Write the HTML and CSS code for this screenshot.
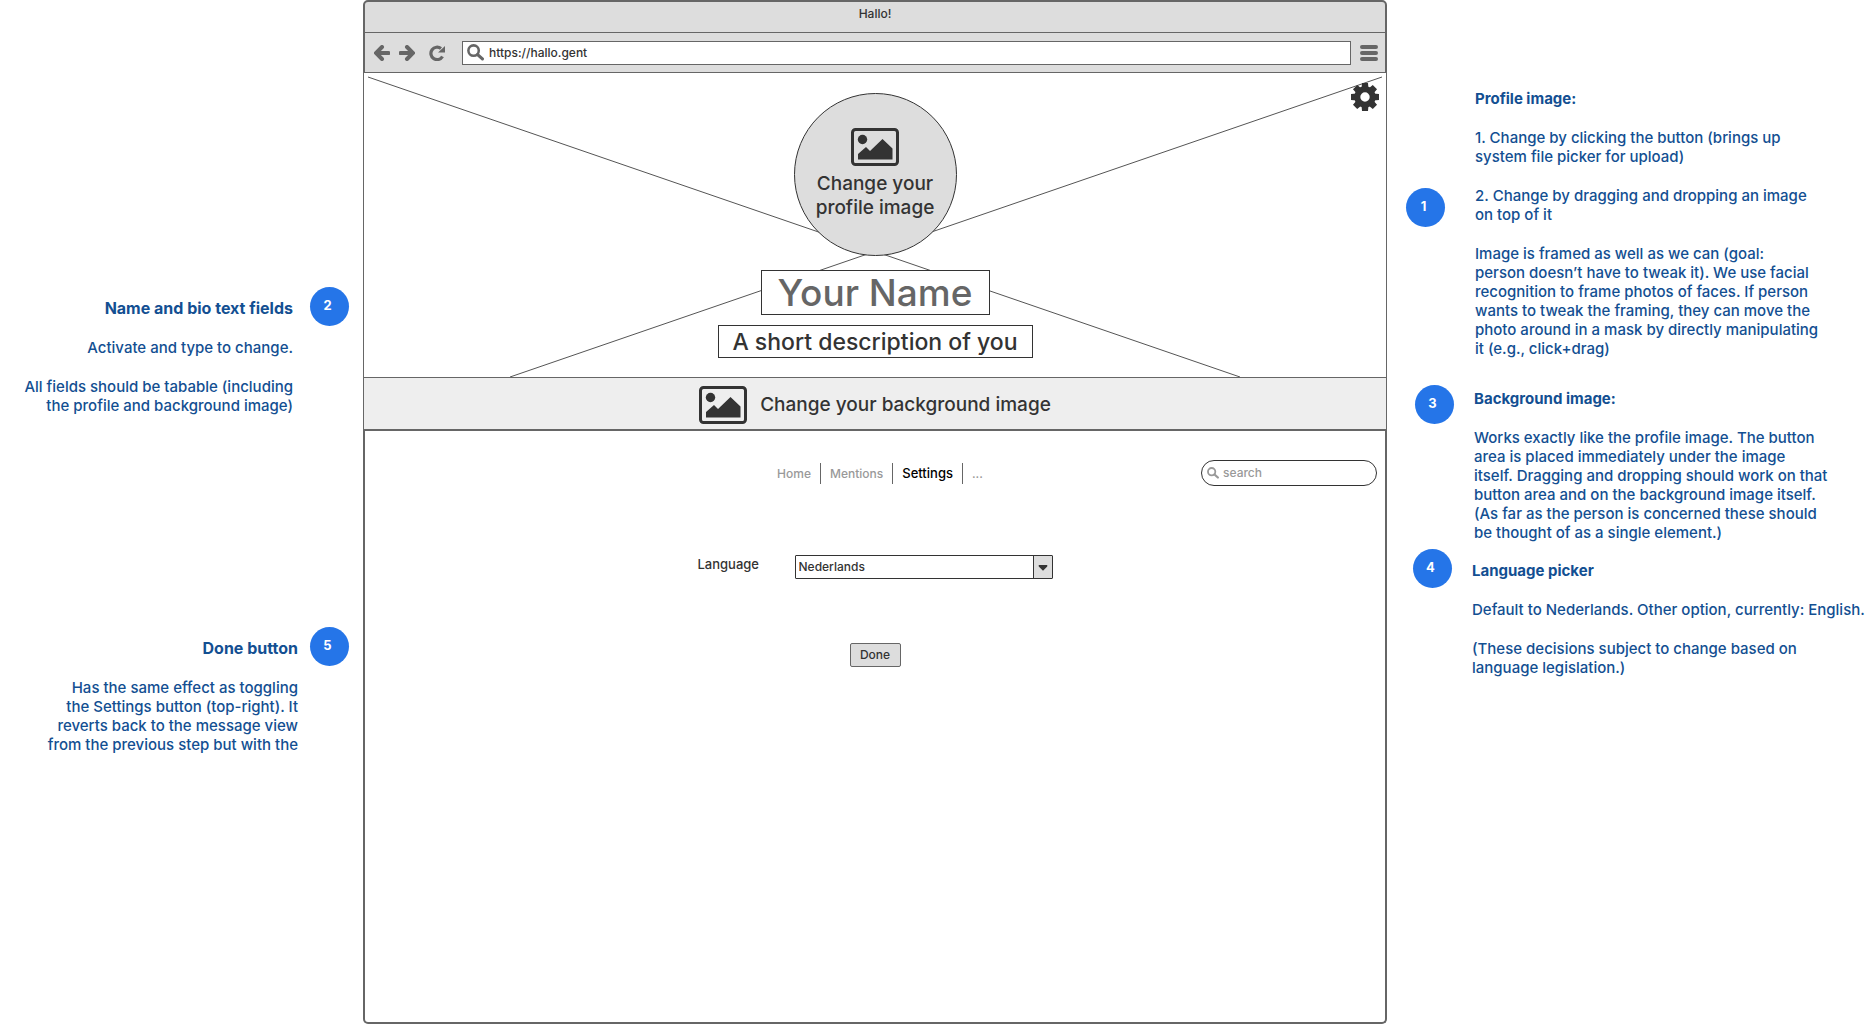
FILE: index.html
```html
<!DOCTYPE html>
<html lang="en">
<head>
<meta charset="utf-8">
<title>Hallo! settings wireframe</title>
<link rel="stylesheet" href="styles.css">
</head>
<body>
<svg class="sprite" aria-hidden="true">
  <symbol id="picture" viewBox="0 0 48 38">
    <rect x="1.5" y="1.5" width="45" height="35" rx="3" fill="none" stroke="currentColor" stroke-width="3"/>
    <circle cx="11.500" cy="11.500" r="4.700" fill="currentColor"/>
    <path d="M7 31.500V26l8-7 4 4L31.500 11 41.500 20.500v11z" fill="currentColor"/>
  </symbol>
  <symbol id="magnifier" viewBox="0 0 16 16">
    <circle cx="6.200" cy="6.200" r="4.900" fill="none" stroke="currentColor" stroke-width="2.400"/>
    <path d="M10 10l4.500 4" stroke="currentColor" stroke-width="3" stroke-linecap="round"/>
  </symbol>
</svg>
<div class="board">
  <aside class="notes notes-left">
    <section class="note note-fields">
      <div class="note-text">
        <h2>Name and bio text fields</h2>
        <p>Activate and type to change.</p>
        <p>All fields should be tabable (including<br>the profile and background image)</p>
      </div>
      <span class="badge">2</span>
    </section>
    <section class="note note-done">
      <div class="note-text">
        <h2>Done button</h2>
        <p>Has the same effect as toggling<br>the Settings button (top-right). It<br>reverts back to the message view<br>from the previous step but with the</p>
      </div>
      <span class="badge">5</span>
    </section>
  </aside>

  <main class="browser">
    <header class="chrome">
      <div class="title">Hallo!</div>
      <div class="toolbar">
        <button class="tool" aria-label="Back"><svg width="16" height="16" viewBox="0 0 16 16"><path d="M8 2L2 8l6 6M3 8h11.500" fill="none" stroke="currentColor" stroke-width="4" stroke-linecap="round" stroke-linejoin="miter"/></svg></button>
        <button class="tool" aria-label="Forward"><svg width="16" height="16" viewBox="0 0 16 16"><path d="M8 2l6 6-6 6M13 8H1.500" fill="none" stroke="currentColor" stroke-width="4" stroke-linecap="round" stroke-linejoin="miter"/></svg></button>
        <button class="tool reload" aria-label="Reload"><svg width="16" height="16" viewBox="0 0 16 16"><path d="M13.500 11.500A6.200 6.200 0 1 1 12 3.600" fill="none" stroke="currentColor" stroke-width="3.200"/><path d="M16 1v6.500H9z" fill="currentColor"/></svg></button>
        <label class="url"><svg width="17" height="17"><use href="#magnifier"/></svg><input type="text" value="https://hallo.gent" aria-label="Address"></label>
        <button class="tool menu" aria-label="Menu"><svg width="18" height="16" viewBox="0 0 18 16"><path d="M2 2h14M2 8h14M2 14h14" stroke="currentColor" stroke-width="4" stroke-linecap="round"/></svg></button>
      </div>
    </header>

    <section class="hero">
      <svg class="cross" viewBox="0 0 1022 304" preserveAspectRatio="none" aria-hidden="true"><path d="M4 4L876 304M1018 4L146 304" vector-effect="non-scaling-stroke"/></svg>
      <button class="gear" aria-label="Settings"><svg width="28" height="28" viewBox="-14 -14 28 28"><g fill="currentColor"><g id="teeth"><path id="tooth" d="M-3.500 -8L-3 -14H3L3.500 -8zM-3.500 8L-3 14H3L3.500 8z"/><use href="#tooth" transform="rotate(90)"/></g><use href="#teeth" transform="rotate(45)"/></g><circle r="7.700" fill="none" stroke="currentColor" stroke-width="6"/></svg></button>
      <button class="avatar"><svg width="48" height="38"><use href="#picture"/></svg><span>Change your<br>profile image</span></button>
      <input class="name" type="text" value="Your Name" aria-label="Name">
      <input class="bio" type="text" value="A short description of you" aria-label="Description">
    </section>

    <button class="background"><svg width="48" height="38"><use href="#picture"/></svg>Change your background image</button>

    <section class="panel">
      <div class="topline">
        <nav class="tabs">
          <a href="#home">Home</a>
          <a href="#mentions">Mentions</a>
          <a href="#settings" class="current">Settings</a>
          <a href="#more">...</a>
        </nav>
        <label class="search"><svg width="12" height="12"><use href="#magnifier"/></svg><input type="search" placeholder="search" aria-label="Search"></label>
      </div>
      <div class="field">
        <label for="language">Language</label>
        <div class="picker">
          <select id="language"><option>Nederlands</option><option>English</option></select>
          <svg class="arrow" width="19" height="22" viewBox="0 0 19 22"><path d="M5 9h9v1.500L9.500 15 5 10.500z" fill="currentColor"/></svg>
        </div>
      </div>
      <button class="done">Done</button>
    </section>
  </main>

  <aside class="notes notes-right">
    <section class="note note-profile">
      <span class="badge">1</span>
      <div class="note-text">
        <h2>Profile image:</h2>
        <p>1. Change by clicking the button (brings up<br>system file picker for upload)</p>
        <p>2. Change by dragging and dropping an image<br>on top of it</p>
        <p>Image is framed as well as we can (goal:<br>person doesn’t have to tweak it). We use facial<br>recognition to frame photos of faces. If person<br>wants to tweak the framing, they can move the<br>photo around in a mask by directly manipulating<br>it (e.g., click+drag)</p>
      </div>
    </section>
    <section class="note note-background">
      <span class="badge">3</span>
      <div class="note-text">
        <h2>Background image:</h2>
        <p>Works exactly like the profile image. The button<br>area is placed immediately under the image<br>itself. Dragging and dropping should work on that<br>button area and on the background image itself.<br>(As far as the person is concerned these should<br>be thought of as a single element.)</p>
      </div>
    </section>
    <section class="note note-language">
      <span class="badge">4</span>
      <div class="note-text">
        <h2>Language picker</h2>
        <p>Default to Nederlands. Other option, currently: English.</p>
        <p>(These decisions subject to change based on<br>language legislation.)</p>
      </div>
    </section>
  </aside>
</div>
</body>
</html>
```
FILE: styles.css
```css
:root {
  --line: #666;
  --ink: #333;
  --fill: #ddd;
  --note: #134f92;
  --badge: #2575e8;
}

* { box-sizing: border-box; }

body {
  margin: 0;
  background: #fff;
  color: var(--ink);
  font: 500 12px/16px Inter, "Open Sans", sans-serif;
}

button, input, select {
  margin: 0;
  padding: 0;
  border: 0;
  border-radius: 0;
  background: none;
  color: inherit;
  font: inherit;
}

input, select { min-width: 0; outline: 0; }

svg { display: block; flex: none; }

.sprite { position: absolute; width: 0; height: 0; }

.board {
  display: grid;
  grid-template-columns: 363fr 1024fr 483fr;
  min-height: 100vh;
}

/* Annotations */
.notes { min-width: 0; color: var(--note); }
.notes-left { padding: 287px 14px 0 0; }
.notes-right { padding: 89px 0 0 19px; }

.note { display: flex; align-items: flex-start; gap: 20px; }
.notes-left .note { justify-content: flex-end; text-align: right; }

.note-text { padding-top: 12px; font-size: 15px; line-height: 19px; white-space: nowrap; }
.note-text h2 { margin: 0; font-size: 15px; font-weight: 700; }
.notes-left h2 { font-size: 16px; }
.note-text p { margin: 20px 0 0; }

.note-fields { gap: 17px; }
.note-done { gap: 12px; margin-top: 212px; }
.note-profile { gap: 30px; }
.note-profile .note-text { padding-top: 0; }
.note-profile .badge { margin-top: 99px; }
.note-background { margin: 27px 0 0 9px; }
.note-background .note-text { padding-top: 4px; }
.note-language { margin: 7px 0 0 7px; }

.badge {
  flex: none;
  width: 39px;
  height: 39px;
  padding-right: 4px;
  border-radius: 50%;
  background: var(--badge);
  color: #fff;
  font-size: 13px;
  font-weight: 700;
  line-height: 36px;
  text-align: center;
}

/* Browser frame */
.browser { display: flex; flex-direction: column; min-width: 0; }

.chrome {
  border: 2px solid var(--line);
  border-bottom-width: 1px;
  border-radius: 5px 5px 0 0;
  background: var(--fill);
}

.title { height: 31px; padding-top: 4px; border-bottom: 1px solid var(--line); text-align: center; }

.toolbar { display: flex; align-items: center; gap: 9px; height: 39px; padding: 0 7px 0 9px; color: var(--line); }
.reload { margin-left: 5px; }

.url {
  display: flex;
  flex: 1;
  align-items: center;
  gap: 5px;
  height: 24px;
  margin-left: 8px;
  padding-left: 4px;
  border: 1px solid var(--line);
  background: #fff;
}
.url input { flex: 1; color: var(--ink); }

/* Cover with profile controls */
.hero {
  position: relative;
  display: flex;
  flex-direction: column;
  align-items: center;
  padding: 20px 0 19px;
  border: solid var(--line);
  border-width: 0 1px;
}

.cross { position: absolute; inset: 0; width: 100%; height: 100%; }
.cross path { fill: none; stroke: #555; stroke-width: 1px; }

.gear { position: absolute; top: 10px; right: 7px; }

.avatar {
  position: relative;
  display: flex;
  flex-direction: column;
  align-items: center;
  gap: 6px;
  width: 163px;
  height: 163px;
  padding-top: 34px;
  border: 1px solid var(--ink);
  border-radius: 50%;
  background: var(--fill);
  font-size: 19px;
  line-height: 24px;
}

.name, .bio { position: relative; border: 1px solid var(--ink); background: #fff; text-align: center; }
.name { width: 229px; height: 45px; margin-top: 14px; color: var(--line); font-size: 37px; }
.bio { width: 315px; height: 33px; margin-top: 10px; font-size: 23px; }

.background {
  display: flex;
  align-items: center;
  justify-content: center;
  gap: 13px;
  height: 54px;
  padding-top: 2px;
  border: 1px solid var(--line);
  border-bottom-width: 2px;
  background: #eee;
  font-size: 19px;
}

/* Settings page */
.panel {
  display: flex;
  flex: 1;
  flex-direction: column;
  align-items: center;
  padding: 29px 8px 0;
  border: 2px solid var(--line);
  border-top: 0;
  border-radius: 0 0 5px 5px;
}

.topline { display: grid; grid-template-columns: 1fr auto 1fr; align-items: center; align-self: stretch; }

.tabs { display: flex; grid-column: 2; margin-left: 10px; }
.tabs a { padding: 0 9px; color: #999; line-height: 21px; text-decoration: none; }
.tabs a + a { border-left: 1px solid var(--line); }
.tabs .current { color: #000; font-size: 13px; }

.search {
  display: flex;
  align-items: center;
  justify-self: end;
  gap: 4px;
  width: 176px;
  height: 26px;
  padding: 0 5px;
  border: 1px solid var(--ink);
  border-radius: 13px;
  color: #999;
}
.search input { flex: 1; }
.search input::placeholder { color: #999; opacity: 1; }

.field { display: flex; width: 355px; margin-top: 69px; }
.field label { flex: 1; font-size: 13px; line-height: 19px; }

.picker { display: flex; position: relative; width: 258px; height: 24px; border: 1px solid var(--ink); border-radius: 1px; }
.picker select { flex: 1; padding-left: 3px; appearance: none; }
.arrow { position: absolute; top: 0; right: 0; border-left: 1px solid var(--ink); background: var(--fill); pointer-events: none; }

.done {
  width: 51px;
  height: 24px;
  margin-top: 64px;
  border: 1px solid var(--line);
  border-radius: 2px;
  background: var(--fill);
}
```
